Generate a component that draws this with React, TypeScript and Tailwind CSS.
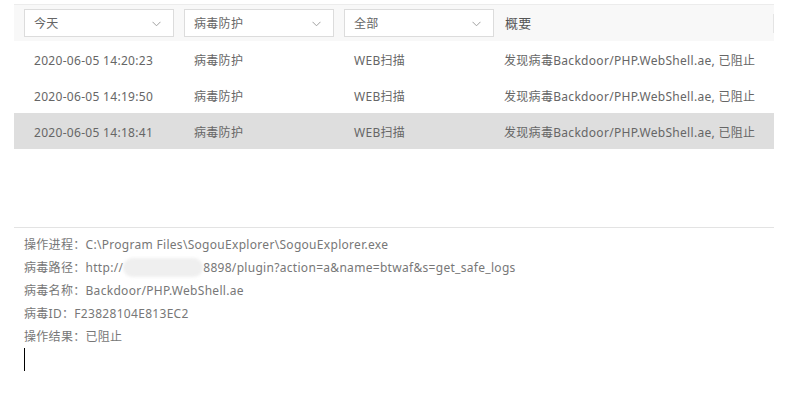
import React from 'react'

const font = { fontFamily: '"Noto Sans", "Noto Sans CJK SC", sans-serif' }

const rows = [
  { time: '2020-06-05 14:20:23', active: false },
  { time: '2020-06-05 14:19:50', active: false },
  { time: '2020-06-05 14:18:41', active: true },
]

function Chevron() {
  return (
    <svg width="9" height="6" viewBox="0 0 9 6" fill="none" className="shrink-0">
      <path d="M0.5 0.8 L4.5 4.8 L8.5 0.8" stroke="#a0a0a0" strokeWidth="1" />
    </svg>
  )
}

function Select({ label, chevron = true }: { label: string; chevron?: boolean }) {
  return (
    <div className="w-[150px] h-[28px] bg-white border border-[#dcdcdc] flex items-center justify-between pl-[9px] pr-[12px] pt-[1px]">
      <span className="text-[12px] text-[#666]">{label}</span>
      {chevron && <Chevron />}
    </div>
  )
}

export default function App() {
  return (
    <div className="w-[788px] h-[403px] bg-white text-[12px] text-[#666] tracking-[0.3px] overflow-hidden" style={font}>
      <div className="pt-[4px] px-[14px]">
        {/* header */}
        <div className="w-[760px] h-[37px] bg-[#f8f8f8] border-t border-[#ececec] flex items-center pl-[10px] gap-[10px] relative">
          <Select label="今天" />
          <Select label="病毒防护" />
          <Select label="全部" />
          <span className="ml-[1px] pt-[2px] text-[13px] text-[#555]">概要</span>
          <div className="absolute right-0 top-[9px] w-px h-[19px] bg-[#e4e4e4]" />
        </div>

        {/* rows */}
        <div className="w-[760px]">
          {rows.map((r, i) => (
            <div
              key={i}
              className={`grid grid-cols-[160px_160px_150px_1fr] h-[36px] items-center pl-[20px] pt-[3px] ${r.active ? 'bg-[#dedede]' : ''}`}
            >
              <span>{r.time}</span>
              <span>病毒防护</span>
              <span>WEB扫描</span>
              <span className="whitespace-nowrap">发现病毒Backdoor/PHP.WebShell.ae, 已阻止</span>
            </div>
          ))}
        </div>

        <div className="h-[78px]" />
        <div className="w-[760px] border-t border-[#e3e3e3]" />

        {/* details */}
        <div className="pl-[10px] pt-[5px] flex flex-col text-[#777]">
          <div className="h-[23px] leading-[23px]">操作进程：C:\Program Files\SogouExplorer\SogouExplorer.exe</div>
          <div className="h-[23px] leading-[23px] flex items-center whitespace-nowrap">
            <span>病毒路径：http://</span>
            <span className="inline-block w-[80px] h-[19px] rounded-full bg-[#efefef] blur-[1.5px]" />
            <span>8898/plugin?action=a&amp;name=btwaf&amp;s=get_safe_logs</span>
          </div>
          <div className="h-[23px] leading-[23px]">病毒名称：Backdoor/PHP.WebShell.ae</div>
          <div className="h-[23px] leading-[23px]">病毒ID：F23828104E813EC2</div>
          <div className="h-[23px] leading-[23px]">操作结果：已阻止</div>
          <div className="w-px h-[23px] bg-black" />
        </div>
      </div>
    </div>
  )
}
